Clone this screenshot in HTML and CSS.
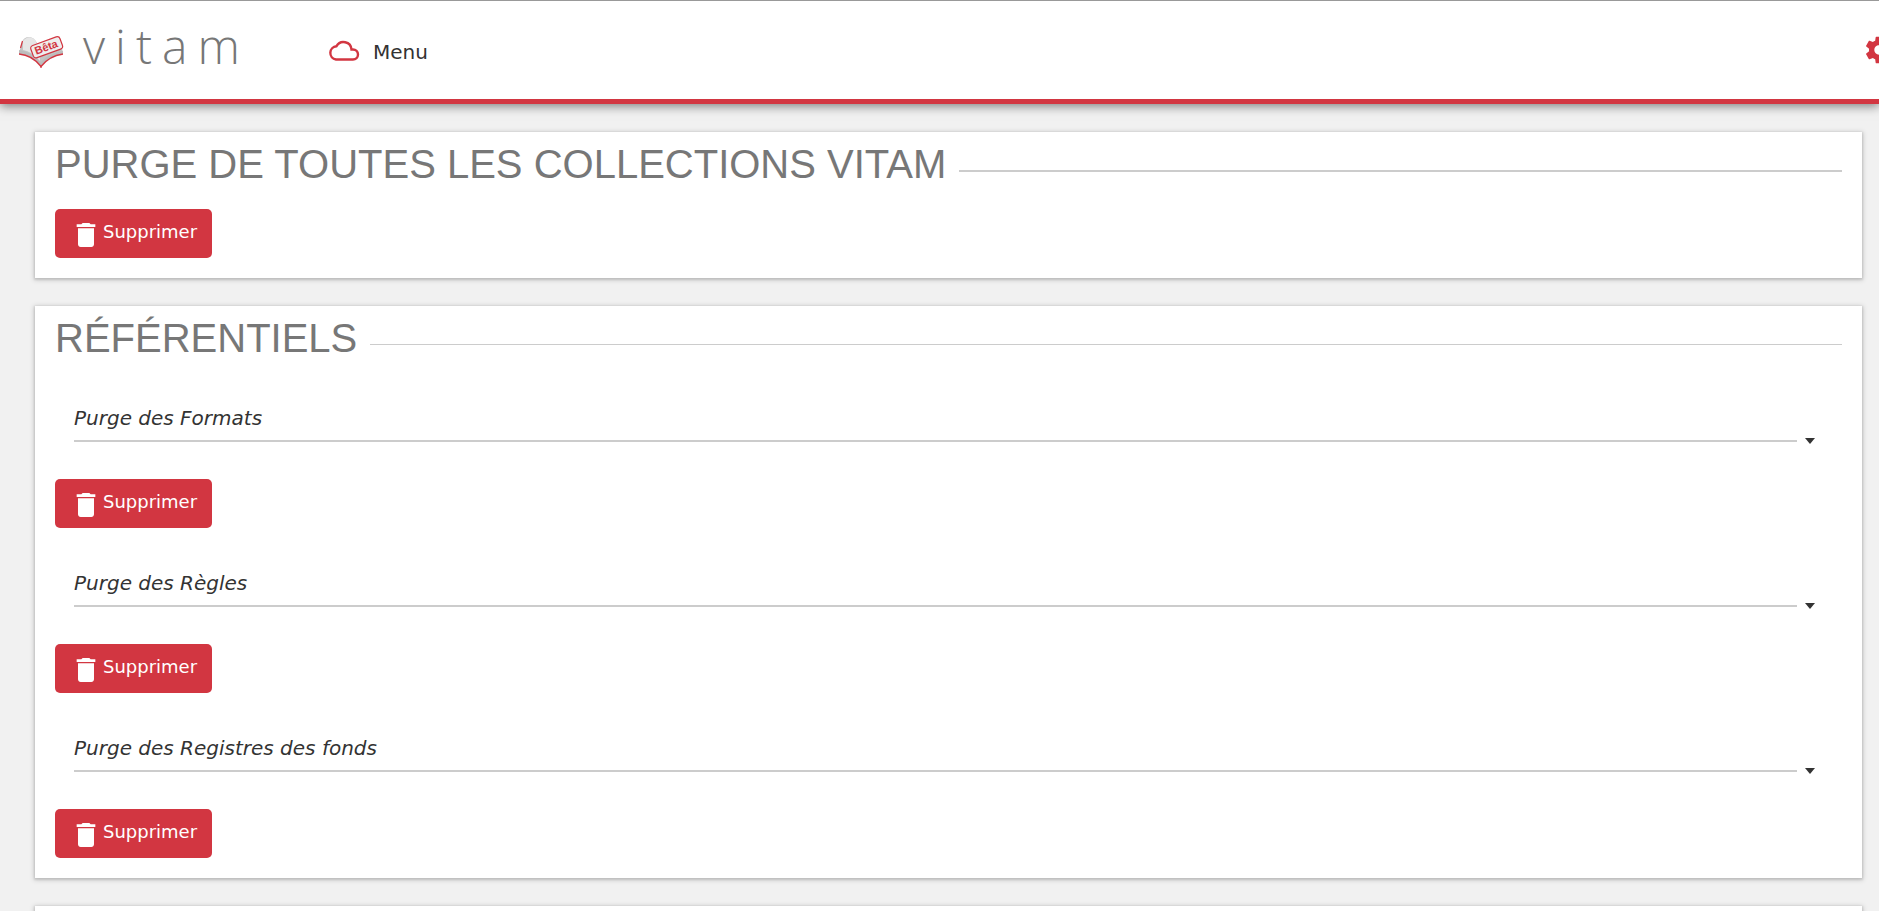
FILE: index.html
```html
<!DOCTYPE html>
<html lang="fr">
<head>
<meta charset="utf-8">
<title>Vitam</title>
<link rel="stylesheet" href="styles.css">
</head>
<body>
<svg class="defs" aria-hidden="true">
  <linearGradient id="page" x1="0" y1="0" x2="0" y2="1"><stop offset="0.3" stop-color="#e6e6e6"/><stop offset="1" stop-color="#b4b4b4"/></linearGradient>
  <symbol id="trash" viewBox="0 0 24 24"><path d="M6 19c0 1.100.9 2 2 2h8c1.100 0 2-.9 2-2V7H6v12zM19 4h-3.500l-1-1h-5l-1 1H5v2h14V4z"/></symbol>
  <symbol id="caret" viewBox="0 0 10 6"><path d="M0 0h10L5 6z"/></symbol>
</svg>
<header class="topbar">
  <a class="brand" href="#">
    <svg class="brand-mark" viewBox="0 0 44 34" aria-hidden="true">
      <path d="M0 17 3 6Q5 1 10 1 15 1 18 7L22 11 32 5 41 2 44 17Q30 19 22 30 12 18 0 17z" fill="#c4c4c4"/>
      <path d="M4 14V5Q10-2 16 4L21 13V26Q13 15 4 14z" fill="#e6e6e6"/>
      <path d="M0 14Q13 16 22 26 30 17 44 15V18Q29 20 22 30 13 19 0 18z" fill="#bcbcbc"/>
      <path d="M0 18Q13 19 22 30.500 30 20 44 18" fill="none" stroke="#d23641" stroke-width="1.300"/>
      <path d="M1.500 12 3.500 5M22 29v3" fill="none" stroke="#d23641" stroke-width="1.200"/>
      <g transform="rotate(-20 27 11)">
        <rect x="12" y="5" width="31" height="13" rx="3" fill="#eee" stroke="#d23641" stroke-width="1.200"/>
        <text class="brand-tag" x="27" y="15" text-anchor="middle">Bêta</text>
      </g>
    </svg>
    <span class="brand-name">vitam</span>
  </a>
  <button class="menu" type="button">
    <svg class="menu-icon" viewBox="0 0 32 22" aria-hidden="true"><path d="M8 20.500h17a5 5 0 0 0 0-10h-1.500A8 8 0 0 0 8.500 7.200 6.700 6.700 0 0 0 8 20.500z"/></svg>
    <span class="menu-label">Menu</span>
  </button>
  <button class="settings" type="button" aria-label="Paramètres">
    <svg class="settings-icon" viewBox="0 0 24 24" aria-hidden="true"><path d="M19.430 12.980c.04-.32.07-.64.07-.98s-.03-.66-.07-.98l2.110-1.650c.19-.15.24-.42.12-.64l-2-3.460c-.12-.22-.39-.3-.61-.22l-2.490 1c-.52-.4-1.080-.73-1.690-.98l-.38-2.650C14.460 2.180 14.250 2 14 2h-4c-.25 0-.46.18-.49.42l-.38 2.650c-.61.25-1.170.59-1.690.98l-2.490-1c-.23-.09-.49 0-.61.22l-2 3.460c-.13.22-.07.49.12.64l2.110 1.650c-.04.32-.07.65-.07.98s.03.66.07.98l-2.110 1.650c-.19.15-.24.42-.12.64l2 3.460c.12.22.39.3.61.22l2.490-1c.52.4 1.080.73 1.690.98l.38 2.650c.03.24.24.42.49.42h4c.25 0 .46-.18.49-.42l.38-2.650c.61-.25 1.170-.59 1.690-.98l2.490 1c.23.09.49 0 .61-.22l2-3.460c.12-.22.07-.49-.12-.64l-2.110-1.650zM12 15.500c-1.930 0-3.500-1.570-3.500-3.500s1.570-3.500 3.500-3.500 3.500 1.570 3.500 3.500-1.570 3.500-3.500 3.500z"/></svg>
  </button>
</header>
<main class="content">
  <section class="card">
    <h1 class="card-title card-title-main">PURGE DE TOUTES LES COLLECTIONS VITAM</h1>
    <button class="delete" type="button"><svg class="delete-icon" aria-hidden="true"><use href="#trash"/></svg>Supprimer</button>
  </section>
  <section class="card">
    <h2 class="card-title">RÉFÉRENTIELS</h2>
    <div class="field">
      <select class="picker" aria-label="Purge des Formats"><option>Purge des Formats</option></select>
      <svg class="caret" aria-hidden="true"><use href="#caret"/></svg>
    </div>
    <button class="delete" type="button"><svg class="delete-icon" aria-hidden="true"><use href="#trash"/></svg>Supprimer</button>
    <div class="field">
      <select class="picker" aria-label="Purge des Règles"><option>Purge des Règles</option></select>
      <svg class="caret" aria-hidden="true"><use href="#caret"/></svg>
    </div>
    <button class="delete" type="button"><svg class="delete-icon" aria-hidden="true"><use href="#trash"/></svg>Supprimer</button>
    <div class="field">
      <select class="picker" aria-label="Purge des Registres des fonds"><option>Purge des Registres des fonds</option></select>
      <svg class="caret" aria-hidden="true"><use href="#caret"/></svg>
    </div>
    <button class="delete" type="button"><svg class="delete-icon" aria-hidden="true"><use href="#trash"/></svg>Supprimer</button>
  </section>
  <section class="card card-next"></section>
</main>
</body>
</html>
```
FILE: styles.css
```css
* { box-sizing: border-box; }

html, body { height: 100%; }

body {
  margin: 0;
  display: flex;
  flex-direction: column;
  overflow: hidden;
  background: #f1f1f1;
  color: #333;
  font-family: "DejaVu Sans", sans-serif;
  font-size: 20px;
}

button, select { font: inherit; color: inherit; border: 0; background: none; padding: 0; }

.defs { position: absolute; width: 0; height: 0; }

.topbar {
  flex: none;
  position: relative;
  display: flex;
  align-items: center;
  height: 104px;
  padding-left: 19px;
  background: #fff;
  border-top: 1px solid #999;
  border-bottom: 5px solid #d23641;
  box-shadow: 0 2px 10px rgba(0, 0, 0, 0.5);
}

.brand {
  display: flex;
  align-items: center;
  gap: 20px;
  width: 309px;
  color: #777;
  text-decoration: none;
}

.brand-mark { width: 44px; height: 34px; margin-top: 6px; overflow: visible; }

.brand-tag { font: bold 11px "Liberation Sans", sans-serif; fill: #d23641; }

.brand-name {
  padding-bottom: 8px;
  font-family: "Open Sans", sans-serif;
  font-size: 48px;
  font-weight: 300;
  line-height: 60px;
  letter-spacing: 10px;
}

.menu { display: flex; align-items: center; gap: 13px; }

.menu-icon { width: 32px; height: 22px; fill: none; stroke: #d23641; stroke-width: 2.400; }

.menu-label { padding-top: 3px; }

.settings { display: flex; margin-left: auto; margin-right: -16px; }

.settings-icon { width: 32px; height: 32px; fill: #d23641; }

.content {
  flex: 1;
  min-height: 0;
  display: flex;
  flex-direction: column;
  gap: 28px;
  padding: 28px 17px 0 35px;
}

.card {
  flex: none;
  padding: 9px 20px 20px;
  background: #fff;
  box-shadow: 0 1px 5px 1px rgba(0, 0, 0, 0.16), 0 1px 2px 1px rgba(0, 0, 0, 0.1);
}

.card-next { height: 160px; }

.card-title {
  display: flex;
  align-items: center;
  gap: 13px;
  margin: 0 0 22px;
  color: #777;
  font: 40px/46px "Liberation Sans", sans-serif;
}

.card-title::after {
  content: "";
  flex: 1;
  height: 1px;
  margin-top: 13px;
  background: #ccc;
}

.card-title-main::after { height: 2px; }

.delete {
  display: flex;
  align-items: center;
  height: 49px;
  padding: 0 15px 4px;
  border-radius: 5px;
  background: #d23641;
  color: #fff;
  font-size: 18px;
}

.delete-icon { width: 32px; height: 32px; margin-top: 7px; margin-right: 1px; fill: #fff; }

.field {
  display: flex;
  align-items: flex-end;
  gap: 8px;
  margin: 39px 27px 37px 19px;
}

.delete + .field { margin-top: 37px; }

.picker {
  flex: 1;
  appearance: none;
  height: 42px;
  padding-bottom: 4px;
  border-bottom: 2px solid #ccc;
  border-radius: 0;
  font-style: italic;
}

.caret { width: 10px; height: 6px; margin-bottom: -2px; fill: #333; }
```
